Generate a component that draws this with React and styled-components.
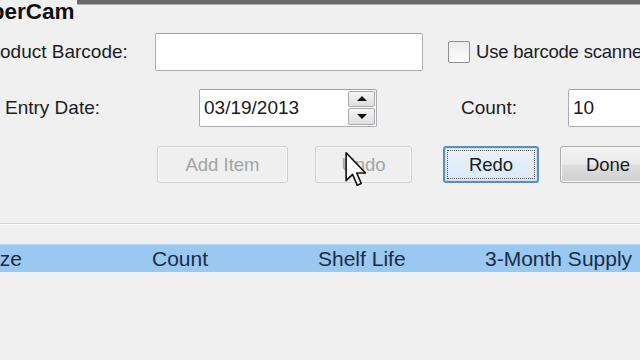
import { createGlobalStyle } from 'styled-components';
import styled from 'styled-components';

const Global = createGlobalStyle`
    html, body {
        margin: 0;
        padding: 0;
        width: 640px;
        height: 360px;
        overflow: hidden;
        background: #f0f0f0;
    }
    body {
        font-family: "Liberation Sans", Arial, sans-serif;
        color: #1e1e1e;
    }
`;

function Cursor() {
    return (
        <CursorBox>
            <svg width="24" height="36" viewBox="0 0 13 20">
                <path
                    d="M1 1 L1 16.5 L4.6 13 L7.2 19 L9.4 18 L6.9 12.2 L11.8 12.2 Z"
                    fill="#fff"
                    stroke="#111"
                    strokeWidth="0.9"
                    strokeLinejoin="round"
                />
            </svg>
        </CursorBox>
    );
}

export default function App() {
    const columns = [
        { title: 'Size', start: -19 },
        { title: 'Count', start: 152 },
        { title: 'Shelf Life', start: 318 },
        { title: '3-Month Supply', start: 485 },
    ];
    return (
        <>
            <Global />
            <Window>
                <TitleRow>
                    <Title>SuperCam</Title>
                    <TitleBar />
                </TitleRow>

                <Row $top={11}>
                    <Label $indent={-19} $width={174}>Product Barcode:</Label>
                    <TextBox $width={268} />
                    <Check />
                    <CheckLabel>Use barcode scanner</CheckLabel>
                </Row>

                <Row $top={19}>
                    <Label $indent={5} $width={194}>Entry Date:</Label>
                    <TextBox $width={178}>
                        <Value>03/19/2013</Value>
                        <Spinner>
                            <SpinButton>
                                <Arrow $up />
                            </SpinButton>
                            <SpinButton>
                                <Arrow />
                            </SpinButton>
                        </Spinner>
                    </TextBox>
                    <Label $indent={84} $width={107}>Count:</Label>
                    <TextBox $width={100}>
                        <Value>10</Value>
                    </TextBox>
                </Row>

                <Row $top={20}>
                    <Spacer $width={157} />
                    <Button disabled $width={131}>Add Item</Button>
                    <Button disabled $width={97} $gap={27}>Undo</Button>
                    <Button $focus $width={96} $gap={31}>Redo</Button>
                    <Button $width={96} $gap={21}>Done</Button>
                    <Cursor />
                </Row>

                <Separator />

                <Header>
                    {columns.map((c) => (
                        <Column key={c.title} style={{ left: c.start }}>
                            {c.title}
                        </Column>
                    ))}
                </Header>
            </Window>
        </>
    );
}

const Window = styled.div`
    width: 640px;
    height: 360px;
    display: flex;
    flex-direction: column;
    overflow: hidden;
`;

const TitleRow = styled.div`
    display: flex;
    align-items: flex-start;
    height: 22px;
`;

const Title = styled.div`
    margin-left: -38px;
    font-size: 22.5px;
    font-weight: bold;
    line-height: 23px;
    color: #111;
`;

const TitleBar = styled.div`
    flex: 1;
    margin-left: 2px;
    height: 4px;
    background: #6a6a6a;
    border-bottom: 1px solid #b0b0b0;
`;

const Row = styled.div`
    position: relative;
    display: flex;
    align-items: center;
    height: 37px;
    margin-top: ${(p) => p.$top}px;
    white-space: nowrap;
`;

const Label = styled.div`
    flex: none;
    margin-left: ${(p) => p.$indent}px;
    width: ${(p) => p.$width}px;
    font-size: 19px;
    color: #1c1c24;
`;

const TextBox = styled.div`
    flex: none;
    position: relative;
    box-sizing: border-box;
    width: ${(p) => p.$width}px;
    height: 38px;
    background: #fff;
    border: 1px solid #abadb3;
    border-top-color: #9ea0a6;
    border-radius: 2px;
    display: flex;
    align-items: center;
`;

const Value = styled.span`
    margin-left: 4px;
    font-size: 19px;
    color: #1a1a1a;
`;

const Spinner = styled.div`
    position: absolute;
    right: 1px;
    top: 1px;
    bottom: 1px;
    width: 27px;
    display: flex;
    flex-direction: column;
    gap: 1px;
`;

const SpinButton = styled.div`
    flex: 1;
    box-sizing: border-box;
    border: 1px solid #a9a9a9;
    border-radius: 2px;
    background: linear-gradient(#f6f6f6, #dedede);
    display: flex;
    align-items: center;
    justify-content: center;
`;

const Arrow = styled.div`
    width: 0;
    height: 0;
    border-left: 5px solid transparent;
    border-right: 5px solid transparent;
    ${(p) => (p.$up ? 'border-bottom: 5px solid #111;' : 'border-top: 5px solid #111;')}
`;

const Check = styled.div`
    flex: none;
    box-sizing: border-box;
    margin-left: 25px;
    width: 22px;
    height: 22px;
    background: linear-gradient(#ececec, #fdfdfd);
    border: 1px solid #8f8f8f;
    border-radius: 2px;
`;

const CheckLabel = styled.div`
    margin-left: 6px;
    font-size: 18.5px;
    letter-spacing: -0.2px;
    color: #1c1c24;
`;

const Spacer = styled.div`
    flex: none;
    width: ${(p) => p.$width}px;
`;

const Button = styled.button`
    flex: none;
    box-sizing: border-box;
    margin: 0 0 0 ${(p) => p.$gap || 0}px;
    width: ${(p) => p.$width}px;
    height: 37px;
    padding: 0;
    font-family: "Liberation Sans", Arial, sans-serif;
    font-size: 18.5px;
    color: #1a1a1a;
    border: 1px solid #acacac;
    border-radius: 3px;
    background: linear-gradient(#f2f2f2 0%, #ebebeb 48%, #dddddd 52%, #cfcfcf 100%);
    box-shadow: inset 0 0 0 1px #fafafa;
    &:disabled {
        color: #a3a3a3;
        border-color: #d0d0d0;
        background: #efefef;
        box-shadow: inset 0 0 0 1px #f8f8f8;
    }
    ${(p) =>
        p.$focus &&
        `
        border: 2px solid #5b8fc4;
        background: linear-gradient(#eaf3fb, #d9e9f6);
        box-shadow: inset 0 0 0 1px #c9dff2;
        outline: 1px dotted #555;
        outline-offset: -5px;
    `}
`;

const CursorBox = styled.div`
    position: absolute;
    left: 344px;
    top: 5px;
    line-height: 0;
`;

const Separator = styled.div`
    margin-top: 40px;
    height: 1px;
    background: #d6d6d6;
    border-bottom: 1px solid #fbfbfb;
`;

const Header = styled.div`
    position: relative;
    margin-top: 19px;
    height: 28px;
    background: #99c8f1;
    border-top: 1px solid #b8d9f5;
    box-sizing: border-box;
`;

const Column = styled.div`
    position: absolute;
    top: 0;
    line-height: 27px;
    font-size: 21px;
    color: #1b2c44;
    white-space: nowrap;
`;
